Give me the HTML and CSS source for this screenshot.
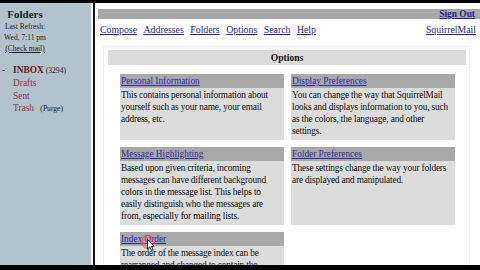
FILE: index.html
```html
<!DOCTYPE html>
<html>
<head>
<meta charset="utf-8">
<link rel="stylesheet" href="styles.css">
</head>
<body>
<div class="screen">
  <aside class="side">
    <div class="side-head">
      <div class="side-title">Folders</div>
      <div class="side-small">Last Refresh:</div>
      <div class="side-small">Wed, 7:11 pm</div>
      <div class="side-small"><a class="plain-link">(Check mail)</a></div>
    </div>
    <ul class="folders">
      <li class="inbox-row"><span class="dash">-</span><span class="inbox">INBOX</span> <span class="count">(3294)</span></li>
      <li class="folder">Drafts</li>
      <li class="folder">Sent</li>
      <li class="folder">Trash <span class="purge">(Purge)</span></li>
    </ul>
  </aside>
  <div class="divider"></div>
  <main class="main">
    <div class="topbar"><a class="signout">Sign Out</a></div>
    <nav class="nav">
      <div class="nav-left">
        <a>Compose</a><a>Addresses</a><a>Folders</a><a>Options</a><a>Search</a><a>Help</a>
      </div>
      <a class="brand">SquirrelMail</a>
    </nav>
    <section class="options">
      <div class="opt-head">Options</div>
      <div class="grid">
        <div class="card">
          <div class="card-title"><a>Personal Information</a></div>
          <div class="card-body">This contains personal information about yourself such as your name, your email address, etc.</div>
        </div>
        <div class="card">
          <div class="card-title"><a>Display Preferences</a></div>
          <div class="card-body">You can change the way that SquirrelMail looks and displays information to you, such as the colors, the language, and other settings.</div>
        </div>
        <div class="card">
          <div class="card-title"><a>Message Highlighting</a></div>
          <div class="card-body">Based upon given criteria, incoming messages can have different background colors in the message list. This helps to easily distinguish who the messages are from, especially for mailing lists.</div>
        </div>
        <div class="card">
          <div class="card-title"><a>Folder Preferences</a></div>
          <div class="card-body">These settings change the way your folders are displayed and manipulated.</div>
        </div>
        <div class="card">
          <div class="card-title cursor-host"><a>Index Order</a><span class="click-ring"></span><svg class="pointer" width="8" height="12" viewBox="0 0 8 12"><path d="M0.5 0.5 L0.5 10 L2.8 7.8 L4.5 11.5 L6 10.8 L4.4 7.3 L7.3 7.3 Z" fill="#fff" stroke="#000" stroke-width="0.8"/></svg></div>
          <div class="card-body">The order of the message index can be rearranged and changed to contain the headers in any order you want.</div>
        </div>
      </div>
    </section>
  </main>
</div>
</body>
</html>
```

FILE: styles.css
```css
html, body {
  margin: 0;
  padding: 0;
  background: #000;
  width: 480px;
  height: 270px;
  overflow: hidden;
  font-family: "Liberation Serif", "Times New Roman", serif;
}

.screen {
  margin-top: 3px;
  height: 262px;
  display: flex;
  overflow: hidden;
  background: #fff;
}

.side {
  width: 93px;
  flex: none;
  background: #b3c3cd;
  border-right: 2px solid #f4f6f7;
  color: #111;
  padding-top: 5px;
  box-sizing: border-box;
}

.side-head {
  width: 50px;
  text-align: center;
}

.side-title {
  font-weight: bold;
  font-size: 11px;
  line-height: 13px;
  color: #1a1a1a;
}

.side-small {
  font-size: 7.5px;
  line-height: 11px;
  color: #222;
}

.plain-link {
  color: #222;
  text-decoration: underline;
}

.folders {
  list-style: none;
  margin: 10px 0 0 0;
  padding: 0 0 0 2px;
  font-size: 9.4px;
  line-height: 12.3px;
}

.inbox-row {
  display: flex;
  align-items: baseline;
}

.dash {
  width: 11px;
  color: #222;
}

.inbox {
  font-weight: bold;
  color: #6e1616;
  margin-right: 2px;
}

.count {
  font-size: 7.6px;
  color: #222;
}

.folder {
  padding-left: 11px;
  color: #8a3a3a;
}

.purge {
  font-size: 7.6px;
  color: #222;
  margin-left: 4px;
}

.divider {
  width: 2px;
  flex: none;
  background: #111;
}

.main {
  flex: 1;
  padding-left: 3px;
  display: flex;
  flex-direction: column;
  min-width: 0;
}

.topbar {
  margin-top: 6px;
  height: 14px;
  background: #a9a9a9;
  display: flex;
  justify-content: flex-end;
  align-items: center;
  padding-right: 5px;
}

.signout {
  font-weight: bold;
  font-size: 9.4px;
  color: #1d1d9c;
  text-decoration: underline;
}

.nav {
  display: flex;
  justify-content: space-between;
  align-items: center;
  height: 12px;
  margin-top: 5px;
  padding: 0 4px 0 2px;
  font-size: 9.8px;
}

.nav a {
  color: #25258f;
  text-decoration: underline;
}

.nav-left {
  display: flex;
  gap: 6.5px;
}

.options {
  margin: 11px 10px 0 5px;
  border: 1px solid #eeeeee;
  border-bottom: none;
  padding: 3px 3px 0 4px;
  flex: 1;
}

.opt-head {
  height: 15px;
  line-height: 15px;
  background: #dcdcdc;
  text-align: center;
  font-weight: bold;
  font-size: 9.6px;
  color: #111;
}

.grid {
  margin: 9px 11px 0 12px;
  display: grid;
  grid-template-columns: 1fr 1fr;
  gap: 7px;
}

.card {
  display: flex;
  flex-direction: column;
}

.card-title {
  height: 14px;
  line-height: 14px;
  background: #a8a8a8;
  padding-left: 1px;
  font-size: 9.3px;
}

.card-title a {
  color: #2b2ba8;
  text-decoration: underline;
}

.card-body {
  flex: 1;
  background: #dcdcdc;
  padding: 1px 1px 3px 1px;
  font-size: 9.3px;
  letter-spacing: -0.15px;
  line-height: 12px;
  color: #111;
}

.cursor-host {
  position: relative;
}

.click-ring {
  position: absolute;
  left: 21px;
  top: 3px;
  width: 14px;
  height: 14px;
  border-radius: 50%;
  background: rgba(230, 110, 110, 0.45);
  border: 1px solid rgba(210, 80, 80, 0.6);
  box-sizing: border-box;
}

.pointer {
  position: absolute;
  left: 27px;
  top: 7px;
}
```
